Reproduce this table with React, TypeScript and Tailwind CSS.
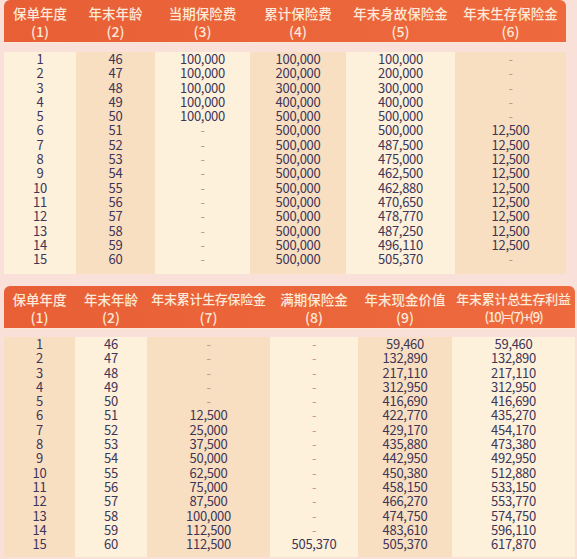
const years = Array.from({ length: 15 }, (_, i) => String(i + 1))
const ages = Array.from({ length: 15 }, (_, i) => String(46 + i))
const rep = (v: string, n: number) => Array.from({ length: n }, () => v)

interface Column {
  title: string
  sub: string
  values: string[]
  dark: boolean
}

const topColumns: Column[] = [
  { title: '保单年度', sub: '(1)', values: years, dark: false },
  { title: '年末年龄', sub: '(2)', values: ages, dark: true },
  { title: '当期保险费', sub: '(3)', values: [...rep('100,000', 5), ...rep('-', 10)], dark: false },
  {
    title: '累计保险费',
    sub: '(4)',
    values: ['100,000', '200,000', '300,000', '400,000', ...rep('500,000', 11)],
    dark: true,
  },
  {
    title: '年末身故保险金',
    sub: '(5)',
    values: [
      '100,000', '200,000', '300,000', '400,000', '500,000', '500,000', '487,500', '475,000',
      '462,500', '462,880', '470,650', '478,770', '487,250', '496,110', '505,370',
    ],
    dark: false,
  },
  { title: '年末生存保险金', sub: '(6)', values: [...rep('-', 5), ...rep('12,500', 9), '-'], dark: true },
]

const bottomColumns: Column[] = [
  { title: '保单年度', sub: '(1)', values: years, dark: true },
  { title: '年末年龄', sub: '(2)', values: ages, dark: false },
  {
    title: '年末累计生存保险金',
    sub: '(7)',
    values: [
      ...rep('-', 5), '12,500', '25,000', '37,500', '50,000', '62,500', '75,000', '87,500',
      '100,000', '112,500', '112,500',
    ],
    dark: true,
  },
  { title: '满期保险金', sub: '(8)', values: [...rep('-', 14), '505,370'], dark: false },
  {
    title: '年末现金价值',
    sub: '(9)',
    values: [
      '59,460', '132,890', '217,110', '312,950', '416,690', '422,770', '429,170', '435,880',
      '442,950', '450,380', '458,150', '466,270', '474,750', '483,610', '505,370',
    ],
    dark: true,
  },
  {
    title: '年末累计总生存利益',
    sub: '(10)=(7)+(9)',
    values: [
      '59,460', '132,890', '217,110', '312,950', '416,690', '435,270', '454,170', '473,380',
      '492,950', '512,880', '533,150', '553,770', '574,750', '596,110', '617,870',
    ],
    dark: false,
  },
]

function Table({ columns, gridClass, bodyClass }: { columns: Column[]; gridClass: string; bodyClass: string }) {
  return (
    <div>
      <div className={`grid ${gridClass} rounded-t-[6px] bg-gradient-to-r from-[#e85f36] to-[#ee6a3e] h-[42px] pt-[4px]`}>
        {columns.map((c) => (
          <div key={c.title} className="flex flex-col items-center text-[#fde9d8] font-medium leading-[18px]">
            <span className={c.title.length > 8 ? 'text-[13px] tracking-[-0.3px] whitespace-nowrap' : 'text-[13.5px] whitespace-nowrap'}>
              {c.title}
            </span>
            <span className={c.sub.length > 4 ? 'text-[13px] tracking-[-1.2px]' : 'text-[14px]'}>{c.sub}</span>
          </div>
        ))}
      </div>
      <div className={`grid ${gridClass} ${bodyClass}`}>
        {columns.map((c) => (
          <div
            key={c.title}
            className={`flex flex-col items-center ${c.dark ? 'bg-[#f9dfc2]' : 'bg-[#fdf1dc]'}`}
          >
            {c.values.map((v, i) => (
              <span
                key={i}
                className={`block h-[14.3px] text-[13px] leading-[14.3px] tracking-[-0.3px] ${v === '-' ? 'text-[#c6968a]' : 'text-[#3e3557]'}`}
              >
                {v}
              </span>
            ))}
          </div>
        ))}
      </div>
    </div>
  )
}

export default function App() {
  return (
    <div className="w-[577px] h-[559px] overflow-hidden bg-[#f9e0d9] font-['Noto_Sans_CJK_SC',sans-serif]">
      <div className="pl-[4px] pr-[11px]">
        <Table
          columns={topColumns}
          gridClass="grid-cols-[72px_79px_95px_96px_109px_111px]"
          bodyClass="h-[232px] pt-[9px] border-t border-[#fbe6d6]"
        />
      </div>
      <div className="pl-[4px] pr-[2px] mt-[12px]">
        <Table
          columns={bottomColumns}
          gridClass="grid-cols-[71px_72px_123px_88px_94px_123px]"
          bodyClass="h-[229px] pt-[8px] border-t border-[#fbe6d6]"
        />
      </div>
    </div>
  )
}
